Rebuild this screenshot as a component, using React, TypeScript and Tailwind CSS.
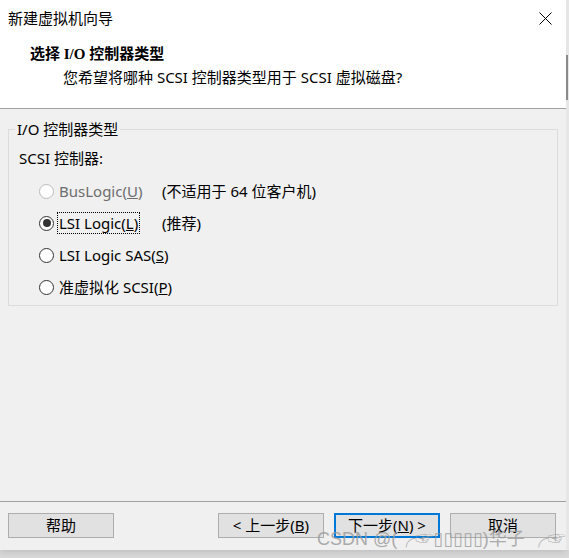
import React from "react";

const UI = { fontFamily: '"Noto Sans", "Noto Sans CJK SC", sans-serif' };

function Radio({ checked, disabled }: { checked?: boolean; disabled?: boolean }) {
  return (
    <span
      className={`flex h-[15px] w-[15px] shrink-0 items-center justify-center rounded-full border bg-white ${
        disabled ? "border-[#bcbcbc]" : "border-[#333333]"
      }`}
    >
      {checked && <span className="h-[8px] w-[8px] rounded-full bg-[#333333]" />}
    </span>
  );
}

function Btn({ children, focused, className = "" }: { children: React.ReactNode; focused?: boolean; className?: string }) {
  return (
    <div
      className={`flex h-[25px] w-[106px] items-center justify-center bg-[#e1e1e1] text-[15px] leading-none text-black ${
        focused ? "border-2 border-[#0078d7]" : "border border-[#adadad]"
      } ${className}`}
    >
      {children}
    </div>
  );
}

export default function App() {
  return (
    <div className="relative h-[558px] w-[569px] overflow-hidden bg-gradient-to-b from-[#e8e8e8] to-[#d8d8d8]" style={UI}>
      <div className="flex h-[558px] w-[569px]">
        <div className="flex h-[550px] w-[566px] flex-col bg-[#f0f0f0] shadow-[0_2px_6px_rgba(0,0,0,0.12)]">
          {/* header */}
          <div className="h-[109px] border-b border-[#a0a0a0] bg-white">
            <div className="flex h-[36px] items-center justify-between pl-[8px] pr-[14px]">
              <span className="text-[15px] leading-[20px] text-black">新建虚拟机向导</span>
              <svg width="13" height="13" viewBox="0 0 13 13">
                <path d="M0.5 0.5 L12.5 12.5 M12.5 0.5 L0.5 12.5" stroke="#000" strokeWidth="1" />
              </svg>
            </div>
            <div
              className="mt-[8px] pl-[30px] text-[15px] font-bold leading-[20px] text-black"
              style={{ fontFamily: '"Liberation Serif", "Noto Sans CJK SC", serif' }}
            >
              选择 I/O 控制器类型
            </div>
            <div className="mt-[3px] pl-[63px] text-[15px] leading-[20px] text-black">
              您希望将哪种 SCSI 控制器类型用于 SCSI 虚拟磁盘?
            </div>
          </div>

          {/* body */}
          <div className="flex-1 px-[8px] pt-[20px]">
            <div className="relative border border-[#dcdcdc] pb-[2px] pt-[18px]">
              <span className="absolute -top-[11px] left-[6px] bg-[#f0f0f0] px-[2px] text-[15px] leading-[20px] text-black">
                I/O 控制器类型
              </span>
              <div className="pl-[10px] text-[15px] leading-[20px] text-black">SCSI 控制器:</div>
              <div className="mt-[7px] flex flex-col pl-[30px] text-[15px] leading-[20px]">
                <div className="flex h-[32px] items-center">
                  <Radio disabled />
                  <span className="ml-[4px] w-[104px] px-[1px] text-[#6d6d6d]">
                    BusLogic(<span className="underline">U</span>)
                  </span>
                  <span className="text-black">(不适用于 64 位客户机)</span>
                </div>
                <div className="flex h-[32px] items-center">
                  <Radio checked />
                  <span className="ml-[3px] w-[105px]">
                    <span className="inline-block border border-dotted border-black px-[1px] text-black">
                      LSI Logic(<span className="underline">L</span>)
                    </span>
                  </span>
                  <span className="text-black">(推荐)</span>
                </div>
                <div className="flex h-[32px] items-center">
                  <Radio />
                  <span className="ml-[4px] px-[1px] text-black">
                    LSI Logic SAS(<span className="underline">S</span>)
                  </span>
                </div>
                <div className="flex h-[32px] items-center">
                  <Radio />
                  <span className="ml-[4px] px-[1px] text-black">
                    准虚拟化 SCSI(<span className="underline">P</span>)
                  </span>
                </div>
              </div>
            </div>
          </div>

          {/* footer */}
          <div className="border-t border-[#a0a0a0] pt-[11px] pb-[12px]">
            <div className="flex items-center pl-[8px]">
              <Btn>帮助</Btn>
              <Btn className="ml-[104px]">
                &lt; 上一步(<span className="underline">B</span>)
              </Btn>
              <Btn focused className="ml-[10px]">
                下一步(<span className="underline">N</span>) &gt;
              </Btn>
              <Btn className="ml-[10px]">取消</Btn>
            </div>
          </div>
        </div>
        <div className="flex h-[550px] w-[3px] flex-col bg-[#e6e6e6]">
          <div className="mt-[55px] h-[45px] w-[2px] bg-[#8a8a8a]" />
        </div>
      </div>

      {/* watermark */}
      <div
        className="pointer-events-none absolute left-[317px] top-[528px] whitespace-nowrap text-[18px] leading-[22px] text-[#9a9a9a] opacity-80"
        style={{ fontFamily: '"Liberation Sans", "Noto Sans CJK SC", "DejaVu Sans", sans-serif' }}
      >
        CSDN @(╭☞▯▯▯▯▯)华子 ╭☞
      </div>
    </div>
  );
}
